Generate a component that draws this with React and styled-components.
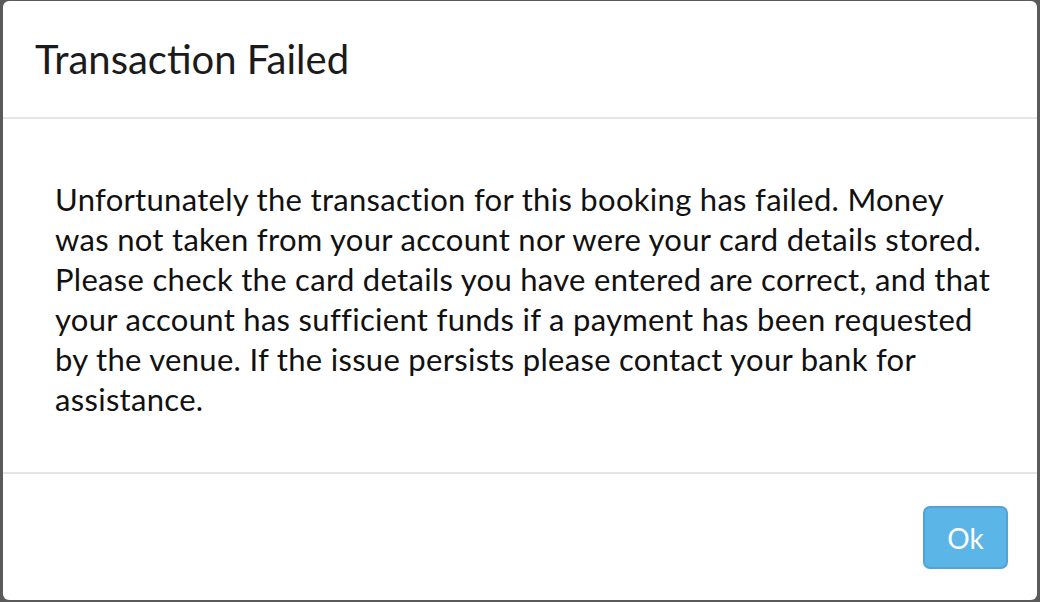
import React from "react";
import styled, { createGlobalStyle } from "styled-components";

const GlobalStyle = createGlobalStyle`
  html, body {
    margin: 0;
    padding: 0;
    background: #5a5a5a;
  }
  * {
    box-sizing: border-box;
  }
`;

const Backdrop = styled.div`
  width: 1040px;
  height: 602px;
  padding: 1px 3px 2px 3px;
  font-family: Lato, "Liberation Sans", sans-serif;
`;

const Modal = styled.div`
  height: 100%;
  background: #fff;
  border-radius: 6px;
  display: flex;
  flex-direction: column;
  overflow: hidden;
`;

const Header = styled.div`
  height: 118px;
  padding: 0 32px;
  display: flex;
  align-items: center;
  border-bottom: 2px solid #e5e5e5;
`;

const Title = styled.h4`
  margin: 0;
  font-size: 40px;
  font-weight: 400;
  line-height: 1.1;
  color: #1b1b1b;
`;

const Body = styled.div`
  flex: 1;
  padding: 60px 30px 0 52px;
  border-bottom: 2px solid #e5e5e5;
`;

const Message = styled.p`
  margin: 0;
  font-size: 31px;
  letter-spacing: 0.3px;
  line-height: 40px;
  color: #111;
  white-space: nowrap;
`;

const Footer = styled.div`
  height: 126px;
  padding: 32px 29px 0 0;
  display: flex;
  justify-content: flex-end;
  align-items: flex-start;
`;

const Button = styled.button`
  width: 85px;
  height: 63px;
  border: 2px solid #4fa3d6;
  border-radius: 7px;
  background: #5bb5e7;
  color: #fff;
  font-family: Lato, "Liberation Sans", sans-serif;
  font-size: 28px;
  cursor: pointer;
`;

const lines = [
  "Unfortunately the transaction for this booking has failed. Money",
  "was not taken from your account nor were your card details stored.",
  "Please check the card details you have entered are correct, and that",
  "your account has sufficient funds if a payment has been requested",
  "by the venue. If the issue persists please contact your bank for",
  "assistance.",
];

const App = () => {
  return (
    <>
      <GlobalStyle />
      <Backdrop>
        <Modal>
          <Header>
            <Title>Transaction Failed</Title>
          </Header>
          <Body>
            <Message>
              {lines.map((line, i) => (
                <React.Fragment key={i}>
                  {line}
                  {i < lines.length - 1 && <br />}
                </React.Fragment>
              ))}
            </Message>
          </Body>
          <Footer>
            <Button>Ok</Button>
          </Footer>
        </Modal>
      </Backdrop>
    </>
  );
};

export default App;
